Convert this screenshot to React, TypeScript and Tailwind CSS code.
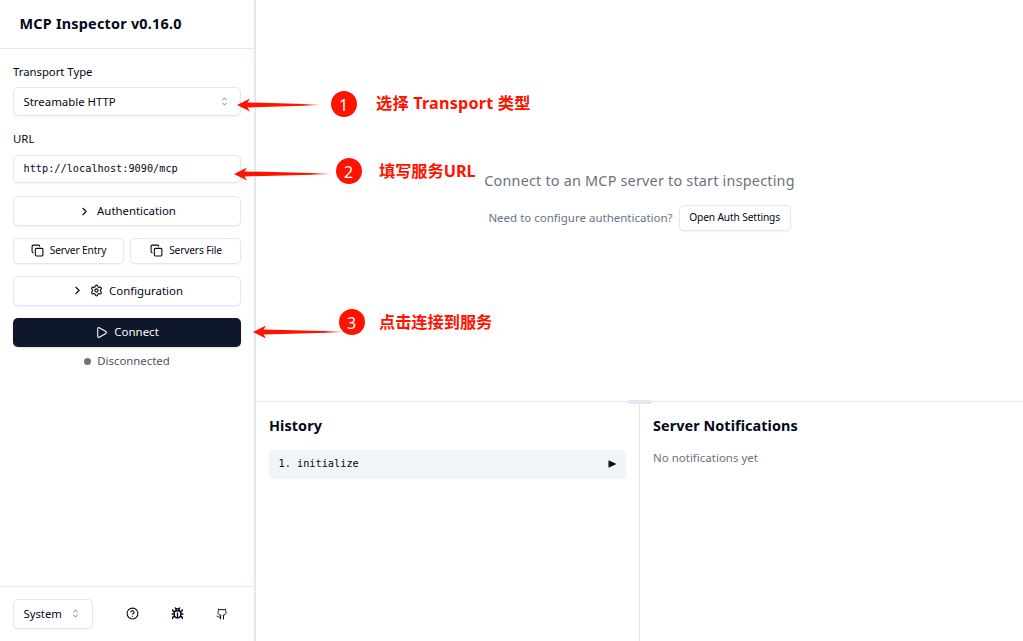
import type { ReactNode } from "react";
import { Bug, ChevronRight, CircleHelp, Copy, Github, Play, Settings } from "lucide-react";

function CaretSort() {
  return (
    <svg width="13" height="13" viewBox="0 0 15 15" fill="#020817" className="shrink-0 opacity-50">
      <path
        fillRule="evenodd"
        clipRule="evenodd"
        d="M4.93179 5.43179C4.75605 5.60753 4.75605 5.89245 4.93179 6.06819C5.10753 6.24392 5.39245 6.24392 5.56819 6.06819L7.49999 4.13638L9.43179 6.06819C9.60753 6.24392 9.89245 6.24392 10.0682 6.06819C10.2439 5.89245 10.2439 5.60753 10.0682 5.43179L7.81819 3.18179C7.73379 3.0974 7.61933 3.04999 7.49999 3.04999C7.38064 3.04999 7.26618 3.0974 7.18179 3.18179L4.93179 5.43179ZM10.0682 9.56819C10.2439 9.39245 10.2439 9.10753 10.0682 8.93179C9.89245 8.75606 9.60753 8.75606 9.43179 8.93179L7.49999 10.8636L5.56819 8.93179C5.39245 8.75606 5.10753 8.75606 4.93179 8.93179C4.75605 9.10753 4.75605 9.39245 4.93179 9.56819L7.18179 11.8182C7.35753 11.9939 7.64245 11.9939 7.81819 11.8182L10.0682 9.56819Z"
      />
    </svg>
  );
}

const box =
  "flex items-center rounded-[5px] border border-[#e2e8f0] bg-white shadow-[0_1px_2px_rgba(0,0,0,0.05)] whitespace-nowrap";

function Arrow({ id, width }: { id: string; width: number }) {
  return (
    <svg width={width} height="14" viewBox={`0 0 ${width} 14`}>
      <defs>
        <linearGradient id={id} x1="0" x2="1" y1="0" y2="0">
          <stop offset="0" stopColor="#ff1200" />
          <stop offset="0.78" stopColor="#ff1200" />
          <stop offset="1" stopColor="#ff1200" stopOpacity="0" />
        </linearGradient>
      </defs>
      <path d={`M0 7L13 0.6L10.5 4.4L${width} 6.4V7.2L10.5 9.4L13 13.4Z`} fill={`url(#${id})`} />
    </svg>
  );
}

function Badge({ children }: { children: ReactNode }) {
  return (
    <span className="flex size-[26px] items-center justify-center rounded-full bg-[#ff1200] pr-px pt-0.5 text-[16px] font-normal leading-none text-white">
      {children}
    </span>
  );
}

const note =
  "absolute whitespace-nowrap font-bold text-[16.2px] leading-[22px] text-[#ff1200]";

export default function App() {
  return (
    <div className="relative flex h-[641px] w-[1023px] overflow-hidden bg-white font-['Noto_Sans','Noto_Sans_CJK_SC',sans-serif] text-[#020817]">
      <aside className="flex w-[256px] shrink-0 flex-col border-r-2 border-[#e2e8f0]">
        <header className="flex h-[49px] shrink-0 items-center border-b border-[#e2e8f0] pl-[19.5px]">
          <h1 className="text-[14.4px] font-bold leading-5 tracking-[0.23px]">MCP Inspector v0.16.0</h1>
        </header>
        <div className="flex flex-1 flex-col px-[13px] pt-[15px]">
          <label className="h-4 text-[11.3px] leading-4">Transport Type</label>
          <div className={`${box} mt-[7px] h-[29px] justify-between px-[9.5px] text-[11.4px]`}>
            <span>Streamable HTTP</span>
            <CaretSort />
          </div>
          <label className="mt-[15px] h-4 text-[11.4px] leading-4">URL</label>
          <div className={`${box} mt-2 h-7 px-[9.5px] pb-px font-['DejaVu_Sans_Mono',monospace] text-[10.25px]`}>
            http://localhost:9090/mcp
          </div>
          <button className={`${box} mt-[13px] h-[30px] justify-center gap-[6px] text-[11.4px]`}>
            <ChevronRight size={13} />
            Authentication
          </button>
          <div className="mt-3 grid grid-cols-2 gap-[6px]">
            <button className={`${box} h-[26px] justify-center gap-[6px] pb-px text-[10.2px] tracking-[-0.15px]`}>
              <Copy size={13} />
              Server Entry
            </button>
            <button className={`${box} h-[26px] justify-center gap-[6px] pb-px pl-px text-[10.2px] tracking-[-0.15px]`}>
              <Copy size={13} />
              Servers File
            </button>
          </div>
          <button className={`${box} mt-3 h-[30px] justify-center gap-[6px] pb-px text-[11.4px]`}>
            <ChevronRight size={13} />
            <Settings size={13} />
            Configuration
          </button>
          <button className="mt-3 flex h-[29px] items-center justify-center gap-[6px] rounded-[5px] bg-[#0f172a] pb-px text-[11.5px] text-[#f8fafc] shadow-sm">
            <Play size={13} />
            Connect
          </button>
          <div className="mt-[6px] flex h-4 items-center justify-center gap-[6px] text-[11.4px] text-[#4b5563]">
            <span className="size-[7px] rounded-full bg-[#6b7280]" />
            Disconnected
          </div>
        </div>
        <footer className="flex h-[55px] shrink-0 items-center border-t border-[#e2e8f0] pb-px pl-[13px]">
          <div className={`${box} h-[30px] w-20 justify-between pl-[9.5px] pr-[10.5px] text-[11.3px]`}>
            <span className="pt-px">System</span>
            <CaretSort />
          </div>
          <div className="ml-[33px] flex items-center gap-8">
            <CircleHelp size={13} />
            <Bug size={13} strokeWidth={2.5} />
            <Github size={12} />
          </div>
        </footer>
      </aside>
      <main className="flex min-w-0 flex-1 flex-col">
        <section className="flex h-[401px] flex-col items-center justify-center gap-[13px] text-[#64748b]">
          <p className="text-[14.4px] leading-[22px] tracking-[0.21px] text-[#6b7280]">Connect to an MCP server to start inspecting</p>
          <div className="flex items-center gap-[6px] text-[11.5px]">
            <span>Need to configure authentication?</span>
            <button className={`${box} h-[26px] w-28 justify-center text-[10.2px] tracking-[-0.13px] text-[#020817]`}>
              Open Auth Settings
            </button>
          </div>
        </section>
        <section className="relative flex flex-1 border-t border-[#e2e8f0]">
          <span className="absolute -top-[2px] left-[371px] h-1 w-[25px] rounded-full bg-[#e2e8f0]" />
          <div className="w-[383px] px-[13px] pt-[13px]">
            <h2 className="text-[14.4px] font-bold leading-[22px] tracking-[0.08px]">History</h2>
            <div className="mt-[13px] flex h-[29px] items-center justify-between rounded-[3px] bg-[#f1f5f9] px-[9.5px] pb-0.5 font-['DejaVu_Sans_Mono',monospace] text-[10.25px]">
              <span>1. initialize</span>
              <svg width="9" height="8" viewBox="0 0 9 8">
                <path d="M0.5 0.2L8.5 4L0.5 7.8Z" fill="#020817" />
              </svg>
            </div>
          </div>
          <div className="flex-1 border-l border-[#e2e8f0] px-[13px] pt-[13px]">
            <h2 className="text-[14.4px] font-bold leading-[22px] tracking-[0.08px]">Server Notifications</h2>
            <p className="mt-[13px] text-[11.5px] leading-4 text-[#6b7280]">No notifications yet</p>
          </div>
        </section>
      </main>
      <div className="absolute left-[237px] top-[98px]"><Arrow id="fade1" width={84} /></div>
      <div className="absolute left-[331px] top-[91px]"><Badge>1</Badge></div>
      <p className={`${note} left-[376px] top-[92px] tracking-[0.2px]`}>选择 Transport 类型</p>
      <div className="absolute left-[234px] top-[167px]"><Arrow id="fade2" width={98} /></div>
      <div className="absolute left-[336px] top-[158px]"><Badge>2</Badge></div>
      <p className={`${note} left-[379px] top-[160px]`}>填写服务URL</p>
      <div className="absolute left-[253px] top-[325px]"><Arrow id="fade3" width={92} /></div>
      <div className="absolute left-[339px] top-[309px]"><Badge>3</Badge></div>
      <p className={`${note} left-[379px] top-[311px]`}>点击连接到服务</p>
    </div>
  );
}
